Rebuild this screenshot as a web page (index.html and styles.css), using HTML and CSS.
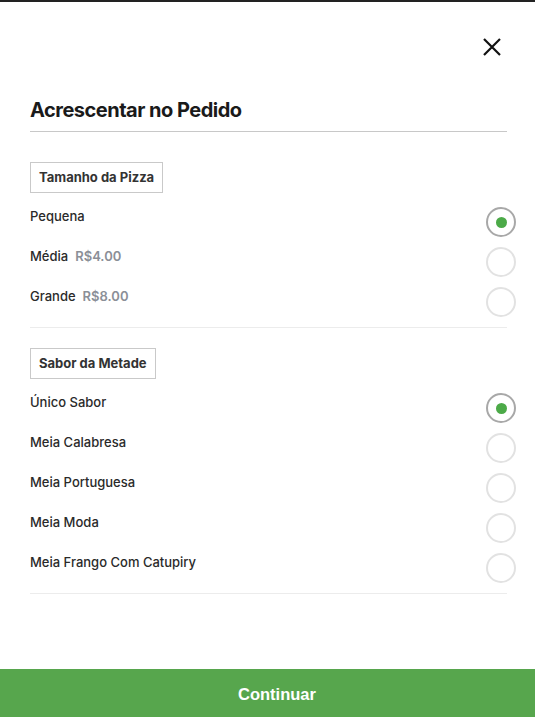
FILE: index.html
```html
<!DOCTYPE html>
<html lang="pt">
<head>
<meta charset="utf-8">
<link rel="stylesheet" href="styles.css">
</head>
<body>
<div class="modal">
  <div class="topbar">
    <button class="close" aria-label="Fechar">
      <svg width="18" height="18" viewBox="0 0 18 18"><path d="M1 1L17 17M17 1L1 17" stroke="#111" stroke-width="2.2" fill="none"/></svg>
    </button>
  </div>
  <h1 class="title">Acrescentar no Pedido</h1>

  <section class="group first">
    <div class="label">Tamanho da Pizza</div>
    <div class="row"><span class="name">Pequena</span><span class="radio checked"></span></div>
    <div class="row"><span class="name">Média<span class="price">R$4.00</span></span><span class="radio"></span></div>
    <div class="row"><span class="name">Grande<span class="price">R$8.00</span></span><span class="radio"></span></div>
  </section>

  <section class="group">
    <div class="label">Sabor da Metade</div>
    <div class="row"><span class="name">Único Sabor</span><span class="radio checked"></span></div>
    <div class="row"><span class="name">Meia Calabresa</span><span class="radio"></span></div>
    <div class="row"><span class="name">Meia Portuguesa</span><span class="radio"></span></div>
    <div class="row"><span class="name">Meia Moda</span><span class="radio"></span></div>
    <div class="row"><span class="name">Meia Frango Com Catupiry</span><span class="radio"></span></div>
  </section>
</div>
<button class="continue">Continuar</button>
</body>
</html>
```
FILE: styles.css
```css
* { box-sizing: border-box; }
html, body { margin: 0; padding: 0; }
body {
  width: 535px;
  height: 717px;
  overflow: hidden;
  background: #fff;
  font-family: Inter, "Liberation Sans", sans-serif;
  color: #222;
  border-top: 2px solid #222;
  position: relative;
}
.modal {
  padding: 0 28px 0 30px;
}
.topbar {
  display: flex;
  justify-content: flex-end;
  padding-top: 36px;
  height: 96px;
}
.close {
  border: 0;
  background: none;
  padding: 0;
  margin-right: 6px;
  width: 18px;
  height: 18px;
  cursor: pointer;
}
.close svg { display: block; }
.title {
  margin: 0;
  font-size: 20px;
  font-weight: 700;
  color: #1a1a1a;
  line-height: 24px;
  padding-bottom: 9px;
  border-bottom: 1px solid #c8c8c8;
  letter-spacing: -0.5px;
}
.group {
  border-bottom: 1px solid #ececec;
  padding-top: 20px;
}
.group.first { padding-top: 30px; }
.label {
  display: inline-block;
  border: 1px solid #c9c9c9;
  padding: 0 8px;
  height: 31px;
  line-height: 29px;
  font-size: 13px;
  font-weight: 700;
  color: #333;
  margin-bottom: 14px;
}
.row {
  display: flex;
  justify-content: space-between;
  align-items: flex-start;
  height: 40px;
}
.name {
  font-size: 13px;
  line-height: 18px;
  color: #2a2a2a;
  font-weight: 500;
}
.price {
  color: #8b8f97;
  font-weight: 600;
  margin-left: 7px;
}
.radio {
  width: 30px;
  height: 30px;
  border-radius: 50%;
  border: 2px solid #e2e2e2;
  margin-right: -9px;
  display: flex;
  align-items: center;
  justify-content: center;
}
.radio.checked { border-color: #a8a8a8; }
.radio.checked::after {
  content: "";
  width: 11px;
  height: 11px;
  border-radius: 50%;
  background: #4caa48;
}
.continue {
  position: absolute;
  left: 0;
  bottom: 0;
  width: 535px;
  height: 48px;
  border: 0;
  padding: 3px 0 0 19px;
  background: #57a64d;
  color: #fff;
  font-family: "Liberation Sans", Arial, sans-serif;
  font-size: 16.5px;
  font-weight: 700;
  cursor: pointer;
}
```
